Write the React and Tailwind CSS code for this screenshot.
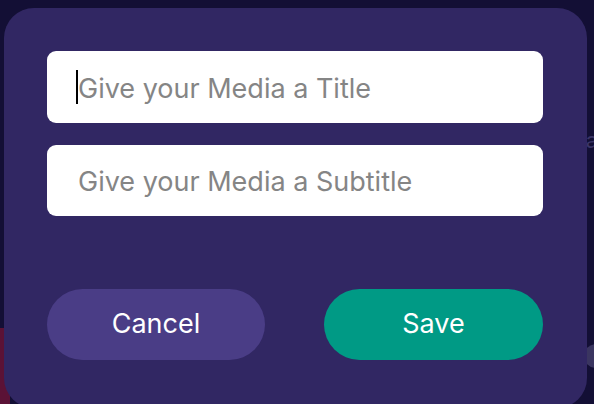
import React, { useState } from "react";

const App = () => {
    const [title, setTitle] = useState("");
    const [subtitle, setSubtitle] = useState("");

    return (
        <div className="w-[594px] h-[404px] overflow-hidden bg-[#130f35] relative pt-[8px] pl-[4px]" style={{ fontFamily: "Inter, 'Liberation Sans', sans-serif" }}>
            {/* bits of the page behind the modal */}
            <div className="absolute left-0 bottom-0 w-[10px] h-[76px] bg-[#5b1236]" />
            <div className="absolute right-[-14px] top-[344px] w-[24px] h-[24px] rounded-full bg-[#3a3560]" />
            <div className="absolute right-[-4px] top-[124px] text-[22px] text-[#3b3566]">a</div>

            <div className="relative w-[583px] h-[400px] rounded-[30px] bg-[#312763] px-[43px] pt-[43px]">
                <div className="flex flex-col gap-[22px]">
                    <div className="relative">
                        <input
                            type="text"
                            value={title}
                            onChange={(e) => setTitle(e.target.value)}
                            placeholder="Give your Media a Title"
                            className="w-[496px] h-[72px] rounded-[9px] bg-white pl-[31px] pt-[2px] text-[27px] text-gray-800 placeholder:text-[#858585] outline-none"
                        />
                        {title === "" && <div className="absolute left-[29px] top-[19px] w-[2px] h-[34px] bg-black" />}
                    </div>
                    <input
                        type="text"
                        value={subtitle}
                        onChange={(e) => setSubtitle(e.target.value)}
                        placeholder="Give your Media a Subtitle"
                        className="w-[496px] h-[71px] rounded-[9px] bg-white pl-[31px] pt-[2px] text-[27px] text-gray-800 placeholder:text-[#858585] outline-none"
                    />
                </div>
                <div className="flex justify-between w-[496px] mt-[73px]">
                    <button className="w-[218px] h-[71px] rounded-full bg-[#4a3d86] text-white text-[27px]">Cancel</button>
                    <button className="w-[219px] h-[71px] rounded-full bg-[#009a85] text-white text-[27px]">Save</button>
                </div>
            </div>
        </div>
    );
};

export default App;
